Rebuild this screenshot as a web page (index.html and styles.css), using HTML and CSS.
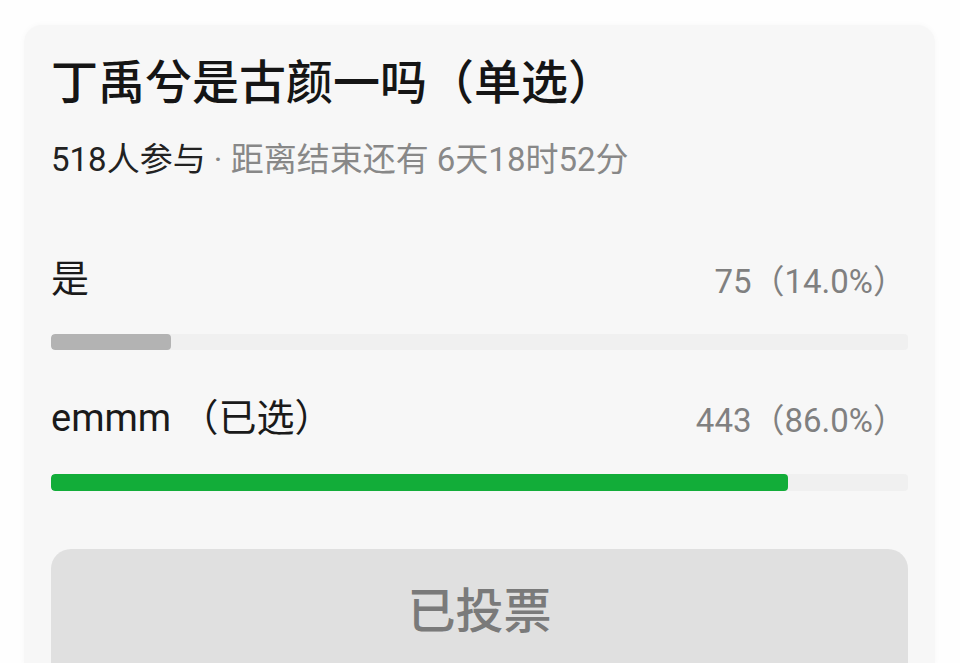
FILE: index.html
```html
<!DOCTYPE html>
<html lang="zh-CN">
<head>
  <meta charset="UTF-8">
  <title>投票</title>
  <link rel="stylesheet" href="styles.css">
</head>
<body>

  <div class="vote-card">
    <h2 class="vote-title">丁禹兮是古颜一吗（单选）</h2>
    <p class="vote-meta"><span class="count">518人参与</span> · 距离结束还有 6天18时52分</p>

    <div class="option">
      <div class="option-row">
        <span class="option-name">是</span>
        <span class="option-result">75（14.0%）</span>
      </div>
      <div class="bar"><div class="bar-fill" style="width: 14%"></div></div>
    </div>

    <div class="option selected">
      <div class="option-row">
        <span class="option-name">emmm （已选）</span>
        <span class="option-result">443（86.0%）</span>
      </div>
      <div class="bar"><div class="bar-fill" style="width: 86%"></div></div>
    </div>

    <button class="vote-btn" disabled>已投票</button>
  </div>

</body>
</html>
```

FILE: styles.css
```css
body {
  margin: 0;
  padding: 25px 25px 0 24px;
  background: #fefefe;
  font-family: Roboto, "Noto Sans CJK SC", sans-serif;
  overflow: hidden;
}

/* card is cut off by the bottom of the screen */
.vote-card {
  width: 911px;
  box-sizing: border-box;
  background: #f7f7f7;
  border-radius: 18px 18px 0 0;
  box-shadow: 0 0 6px rgba(0, 0, 0, 0.03);
  padding: 25px 27px 0 27px;
}

.vote-title {
  margin: 0;
  font-size: 47px;
  font-weight: 500;
  line-height: 66px;
  color: #151515;
}

.vote-meta {
  margin: 24px 0 0;
  font-size: 33px;
  line-height: 40px;
  color: #888;
}

.vote-meta .count {
  color: #222;
}

.option {
  margin-top: 74px;
}

.option + .option {
  margin-top: 43px;
}

.option-row {
  display: flex;
  justify-content: space-between;
  align-items: center;
  padding-right: 2px;
}

.option-name {
  font-size: 38px;
  line-height: 50px;
  color: #1a1a1a;
}

.option-result {
  font-size: 33px;
  color: #808080;
}

.bar {
  margin-top: 30px;
  height: 16px;
  background: #f0f0f0;
  border-radius: 4px;
  overflow: hidden;
}

.selected .bar {
  margin-top: 31px;
  height: 17px;
}

.bar-fill {
  height: 100%;
  background: #b3b3b3;
  border-radius: 4px;
}

.selected .bar-fill {
  background: #12ad39;
}

.vote-btn {
  display: block;
  width: 100%;
  height: 115px;
  margin-top: 58px;
  border: none;
  border-radius: 20px 20px 0 0;
  background: #e0e0e0;
  color: #7a7a7a;
  font-family: inherit;
  font-size: 48px;
  font-weight: 500;
  padding: 0;
}
```
